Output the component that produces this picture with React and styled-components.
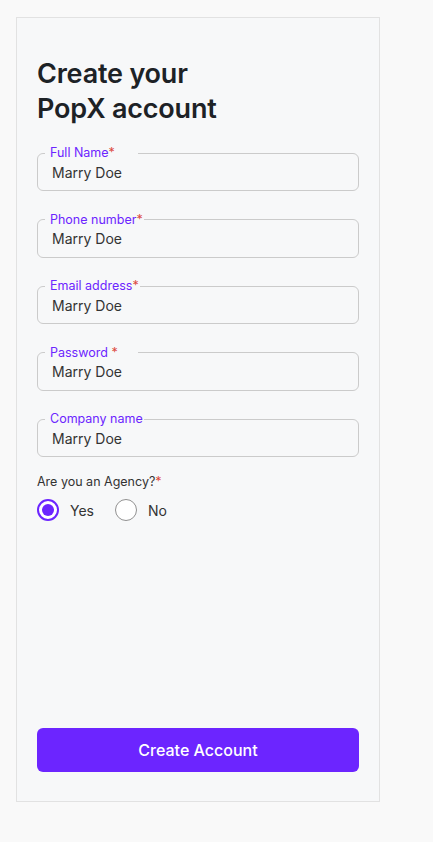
import React, { useState } from 'react';
import styled, { createGlobalStyle } from 'styled-components';

const GlobalStyle = createGlobalStyle`
  body {
    margin: 0;
    background: #f9f9f9;
    font-family: 'Inter', 'Roboto', sans-serif;
  }
`;

const Card = styled.div`
  box-sizing: border-box;
  width: 364px;
  height: 785px;
  margin: 17px 0 0 16px;
  padding: 38px 20px 29px 20px;
  background: #f7f8f9;
  border: 1px solid #e2e2e2;
  display: flex;
  flex-direction: column;
`;

const Title = styled.h1`
  margin: 0 0 19px;
  font-size: 27px;
  line-height: 35px;
  font-weight: 600;
  color: #1d2226;
  letter-spacing: -0.2px;
`;

const Fields = styled.div`
  display: flex;
  flex-direction: column;
  gap: 20.5px;
`;

const Field = styled.fieldset`
  margin: 0;
  padding: 0 14px 7px;
  border: 1px solid #cbcbcb;
  border-radius: 6px;
  min-width: 0;
`;

const Legend = styled.legend`
  margin-left: -7px;
  padding: 0 1px 0 5px;
  min-width: 87px;
  font-size: 12.5px;
  line-height: 16px;
  color: #6c25ff;
`;

const Star = styled.span`
  color: #dd4a3d;
`;

const Input = styled.input`
  display: block;
  width: 100%;
  height: 22px;
  padding: 0;
  border: none;
  background: transparent;
  outline: none;
  font-family: inherit;
  font-size: 14px;
  color: #333;
`;

const Question = styled.div`
  margin-top: 17px;
  font-size: 12.5px;
  line-height: 16px;
  color: #333;
`;

const Options = styled.div`
  display: flex;
  gap: 21px;
  margin-top: 9px;
`;

const Option = styled.label`
  display: flex;
  align-items: center;
  gap: 11px;
  font-size: 14px;
  color: #333;
  cursor: pointer;
`;

const Radio = styled.input`
  appearance: none;
  margin: 0;
  box-sizing: border-box;
  width: 22px;
  height: 22px;
  border-radius: 50%;
  border: 1.5px solid #919191;
  background: #fff;
  display: grid;
  place-items: center;

  &:checked {
    border: 2px solid #6c25ff;
  }

  &:checked::after {
    content: '';
    width: 12px;
    height: 12px;
    border-radius: 50%;
    background: #6c25ff;
  }
`;

const Submit = styled.button`
  margin-top: auto;
  height: 44px;
  border: none;
  border-radius: 6px;
  background: #6c25ff;
  color: #fff;
  font-family: inherit;
  font-size: 16px;
  font-weight: 500;
  cursor: pointer;
`;

const fields = [
  { label: 'Full Name', required: true },
  { label: 'Phone number', required: true },
  { label: 'Email address', required: true },
  { label: 'Password ', required: true },
  { label: 'Company name', required: false },
];

export default function App() {
  const [agency, setAgency] = useState('yes');

  return (
    <>
      <GlobalStyle />
      <Card>
        <Title>
          Create your
          <br />
          PopX account
        </Title>
        <Fields>
          {fields.map((f) => (
            <Field key={f.label}>
              <Legend>
                {f.label}
                {f.required && <Star>*</Star>}
              </Legend>
              <Input defaultValue="Marry Doe" />
            </Field>
          ))}
        </Fields>
        <Question>
          Are you an Agency?<Star>*</Star>
        </Question>
        <Options>
          <Option>
            <Radio
              type="radio"
              name="agency"
              checked={agency === 'yes'}
              onChange={() => setAgency('yes')}
            />
            Yes
          </Option>
          <Option>
            <Radio
              type="radio"
              name="agency"
              checked={agency === 'no'}
              onChange={() => setAgency('no')}
            />
            No
          </Option>
        </Options>
        <Submit>Create Account</Submit>
      </Card>
    </>
  );
}
